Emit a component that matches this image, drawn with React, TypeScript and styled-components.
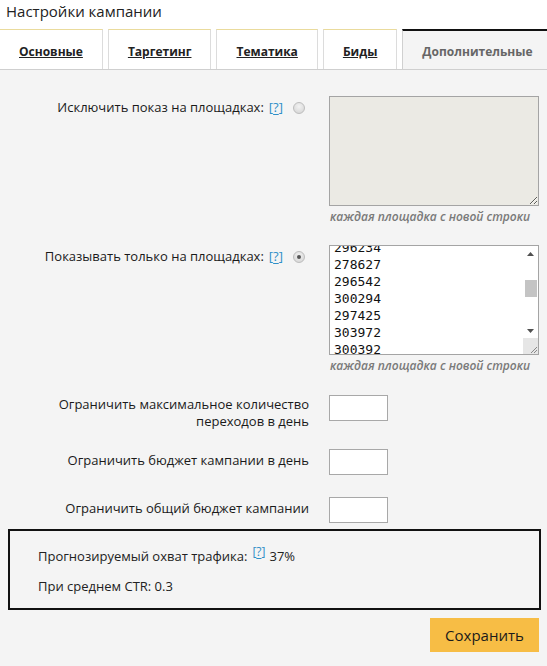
import React, { useEffect, useRef } from "react";
import styled, { createGlobalStyle, css } from "styled-components";

const GlobalStyle = createGlobalStyle`
  html, body {
    margin: 0;
    padding: 0;
    background: #f4f4f4;
  }
  body {
    font-family: "Open Sans", "Noto Sans", sans-serif;
    color: #222;
  }
`;

const Page = styled.div`
  width: 547px;
  min-height: 666px;
  background: #f4f4f4;
  overflow: hidden;
`;

const Header = styled.div`
  background: #fff;
`;

const Title = styled.div`
  height: 29px;
  padding: 1px 6px 0;
  box-sizing: border-box;
  font-size: 15px;
  line-height: 20px;
  color: #222;
`;

const TabBar = styled.div`
  display: flex;
  gap: 5px;
  height: 40px;
  border-bottom: 1px solid #cfcfcf;
  overflow: hidden;
`;

const Tab = styled.div<{ active?: boolean }>`
  flex: none;
  height: 40px;
  box-sizing: border-box;
  padding: 13px 19px 0;
  font-size: 12px;
  line-height: 18px;
  font-weight: 700;
  background: #fff;
  border: 1px solid #dcdcdc;
  border-top-color: #eadb9c;
  border-bottom: none;
  white-space: nowrap;
  &:first-child {
    margin-left: -1px;
  }
  a {
    color: #222;
    text-decoration: underline;
  }
  ${({ active }) =>
    active &&
    css`
      background: #f4f4f4;
      border-top: 2px solid #111;
      border-left-color: #d0d0d0;
      color: #666;
      height: 41px;
      padding-top: 12px;
      flex: 1;
    `}
`;

const Form = styled.div`
  display: grid;
  grid-template-columns: 309px 210px;
  column-gap: 20px;
  align-items: start;
  padding: 26px 0 0;
`;

const Label = styled.div<{ top?: number; gap?: number }>`
  text-align: right;
  font-size: 13px;
  line-height: 17px;
  padding-top: ${({ top }) => top ?? 4}px;
  margin-top: ${({ gap }) => gap ?? 0}px;
  color: #1a1a1a;
`;

const FieldLabel = styled(Label)`
  display: flex;
  justify-content: flex-end;
  align-items: center;
  padding-right: 4px;
`;

const Help = styled.a<{ sup?: boolean }>`
  color: #2f8fc8;
  font-size: 13px;
  margin-left: 5px;
  text-decoration: none;
  u {
    text-decoration: underline;
    text-underline-offset: 2px;
  }
  ${({ sup }) =>
    sup &&
    css`
      position: relative;
      top: -5px;
      font-size: 12px;
      margin: 0 4px 0 5px;
    `}
`;

const Radio = styled.span<{ checked?: boolean }>`
  display: inline-block;
  width: 12px;
  height: 12px;
  margin-left: 10px;
  border-radius: 50%;
  border: 1px solid #bdbdbd;
  background: radial-gradient(circle at 50% 35%, #f2f2f2, #d2d2d2);
  box-sizing: border-box;
  position: relative;
  ${({ checked }) =>
    checked &&
    css`
      &::after {
        content: "";
        position: absolute;
        left: 3px;
        top: 3px;
        width: 4px;
        height: 4px;
        border-radius: 50%;
        background: #555;
      }
    `}
`;

const FieldCell = styled.div<{ gap?: number }>`
  display: flex;
  flex-direction: column;
  margin-top: ${({ gap }) => gap ?? 0}px;
`;

const Area = styled.textarea`
  width: 210px;
  height: 110px;
  box-sizing: border-box;
  margin: 0;
  border: 1px solid #a4a4a4;
  background: #ebeae4;
  resize: both;
  font-family: "DejaVu Sans Mono", monospace;
  font-size: 13px;
  outline: none;
`;

const Hint = styled.div`
  font-size: 12px;
  font-style: italic;
  font-weight: 600;
  color: #7a7a7a;
  line-height: 16px;
  padding: 3px 0 0 1px;
`;

const ListBox = styled.div`
  width: 210px;
  height: 110px;
  box-sizing: border-box;
  border: 1px solid #a4a4a4;
  background: #fff;
  display: flex;
`;

const ListArea = styled.textarea`
  flex: 1;
  min-width: 0;
  margin: 0;
  border: none;
  padding: 1px 4px;
  resize: none;
  overflow: hidden;
  font-family: "DejaVu Sans Mono", monospace;
  font-size: 13px;
  line-height: 17px;
  color: #111;
  background: #fff;
  outline: none;
`;

const ScrollBar = styled.div`
  width: 15px;
  display: flex;
  flex-direction: column;
  background: #fff;
`;

const ScrollButton = styled.div`
  height: 15px;
  display: flex;
  align-items: center;
  justify-content: center;
`;

const Track = styled.div`
  flex: 1;
  position: relative;
`;

const Thumb = styled.div`
  position: absolute;
  left: 2px;
  right: 1px;
  height: 17px;
  background: #c4c4c4;
`;

const Corner = styled.div`
  height: 16px;
  background: #e6e6e6;
  display: flex;
  align-items: flex-end;
  justify-content: flex-end;
`;

const SmallInput = styled.input`
  width: 59px;
  height: 26px;
  box-sizing: border-box;
  margin: 0;
  border: 1px solid #a8a8a8;
  background: #fff;
  outline: none;
`;

const Summary = styled.div`
  margin: 6px 6px 0 8px;
  border: 2px solid #111;
  padding: 17px 28px 13px;
  font-size: 13px;
  line-height: 17px;
  display: flex;
  flex-direction: column;
  gap: 13px;
`;

const SummaryLine = styled.div`
  height: 17px;
`;

const Footer = styled.div`
  display: flex;
  justify-content: flex-end;
  padding: 8px 8px 0;
`;

const SaveButton = styled.button`
  width: 109px;
  height: 34px;
  border: none;
  background: #f7bd45;
  color: #1b1b1b;
  font-family: "Open Sans", "Noto Sans", sans-serif;
  font-size: 15px;
  cursor: pointer;
`;

const Arrow = ({ down }: { down?: boolean }) => (
  <svg width="7" height="4" viewBox="0 0 7 4">
    <path d={down ? "M0 0H7L3.5 4Z" : "M0 4H7L3.5 0Z"} fill="#505050" />
  </svg>
);

const Grip = () => (
  <svg width="10" height="10" viewBox="0 0 10 10">
    <path d="M9 3L3 9M9 6L6 9" stroke="#888" strokeWidth="1" />
  </svg>
);

const sites = [
  "281145", "290376", "301284", "277563", "295520", "289041",
  "302817", "284960", "299305", "291688", "276450", "296234",
  "278627", "296542", "300294", "297425", "303972", "300392",
  "285517", "298806", "301655", "287230", "294118", "302044",
  "279931", "293347", "300871", "288452", "297013", "304206",
];

const App: React.FC = () => {
  const listRef = useRef<HTMLTextAreaElement>(null);

  useEffect(() => {
    if (listRef.current) listRef.current.scrollTop = 195;
  }, []);

  return (
    <Page>
      <GlobalStyle />
      <Header>
        <Title>Настройки кампании</Title>
        <TabBar>
          <Tab><a>Основные</a></Tab>
          <Tab><a>Таргетинг</a></Tab>
          <Tab><a>Тематика</a></Tab>
          <Tab><a>Биды</a></Tab>
          <Tab active>Дополнительные</Tab>
        </TabBar>
      </Header>

      <Form>
        <FieldLabel top={3}>
          Исключить показ на площадках:
          <Help>[<u>?</u>]</Help>
          <Radio />
        </FieldLabel>
        <FieldCell>
          <Area defaultValue="" />
          <Hint>каждая площадка с новой строки</Hint>
        </FieldCell>

        <FieldLabel top={3} gap={20}>
          Показывать только на площадках:
          <Help>[<u>?</u>]</Help>
          <Radio checked />
        </FieldLabel>
        <FieldCell gap={20}>
          <ListBox>
            <ListArea ref={listRef} defaultValue={sites.join("\n")} />
            <ScrollBar>
              <ScrollButton><Arrow /></ScrollButton>
              <Track>
                <Thumb style={{ top: 19 }} />
              </Track>
              <ScrollButton><Arrow down /></ScrollButton>
              <Corner><Grip /></Corner>
            </ScrollBar>
          </ListBox>
          <Hint>каждая площадка с новой строки</Hint>
        </FieldCell>

        <Label top={1} gap={21}>
          Ограничить максимальное количество
          <br />
          переходов в день
        </Label>
        <FieldCell gap={21}>
          <SmallInput />
        </FieldCell>

        <Label top={3} gap={19}>
          Ограничить бюджет кампании в день
        </Label>
        <FieldCell gap={19}>
          <SmallInput />
        </FieldCell>

        <Label top={3} gap={22}>
          Ограничить общий бюджет кампании
        </Label>
        <FieldCell gap={22}>
          <SmallInput />
        </FieldCell>
      </Form>

      <Summary>
        <SummaryLine>
          Прогнозируемый охват трафика:
          <Help sup>[<u>?</u>]</Help>
          37%
        </SummaryLine>
        <SummaryLine>При среднем CTR: 0.3</SummaryLine>
      </Summary>

      <Footer>
        <SaveButton>Сохранить</SaveButton>
      </Footer>
    </Page>
  );
};

export default App;
